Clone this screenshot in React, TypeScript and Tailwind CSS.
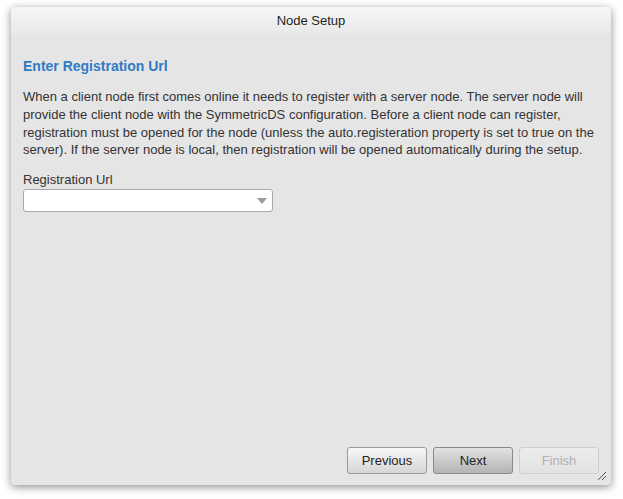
const font = { fontFamily: '"Liberation Sans", Arial, sans-serif' };

const ResizeGrip = () => (
    <svg width="10" height="10" viewBox="0 0 10 10" className="absolute right-[4px] bottom-[4px]">
        <line x1="1" y1="9" x2="9" y2="1" stroke="#555" strokeWidth="1" />
        <line x1="5" y1="9" x2="9" y2="5" stroke="#555" strokeWidth="1" />
    </svg>
);

export default function App() {
    return (
        <div className="w-[623px] h-[499px] bg-white pt-[7px] pl-[11px]" style={font}>
            <div className="relative w-[600px] h-[478px] rounded-[4px] bg-[#e5e5e5] shadow-[0_2px_8px_rgba(0,0,0,0.45)] flex flex-col">
                <div className="h-[28px] rounded-t-[4px] bg-gradient-to-b from-[#f6f6f6] to-[#e8e8e8] flex items-center justify-center text-[13px] text-[#222] pb-[1px]">
                    Node Setup
                </div>
                <div className="flex flex-col px-[12px] pt-[23px] flex-1">
                    <h1 className="text-[14px] font-bold text-[#2e7bc4] leading-[17px]">Enter Registration Url</h1>
                    <p className="mt-[13px] text-[13px] leading-[17.8px] text-[#333]">
                        When a client node first comes online it needs to register with a server node. The server node will
                        provide the client node with the SymmetricDS configuration. Before a client node can register,
                        registration must be opened for the node (unless the auto.registeration property is set to true on the
                        server). If the server node is local, then registration will be opened automatically during the setup.
                    </p>
                    <label className="mt-[13px] text-[13px] leading-[16px] text-[#333]">Registration Url</label>
                    <div className="mt-[1px] w-[250px] h-[23px] bg-white border border-[#a9a9a9] rounded-[3px] flex items-center justify-end pr-[5px]">
                        <svg width="10" height="6" viewBox="0 0 10 6">
                            <path d="M0 0 L10 0 L5 6 Z" fill="#9a9a9a" />
                        </svg>
                    </div>
                    <div className="flex-1" />
                    <div className="flex justify-end gap-[6px] pb-[11px]">
                        <button className="w-[80px] h-[27px] rounded-[3px] border border-[#9a9a9a] bg-gradient-to-b from-[#f7f7f7] to-[#d6d6d6] text-[13px] text-[#222]">
                            Previous
                        </button>
                        <button className="w-[80px] h-[27px] rounded-[3px] border border-[#8a8a8a] bg-gradient-to-b from-[#e2e2e2] to-[#b4b4b4] text-[13px] text-[#222]">
                            Next
                        </button>
                        <button className="w-[80px] h-[27px] rounded-[3px] border border-[#cfcfcf] bg-gradient-to-b from-[#ececec] to-[#e2e2e2] text-[13px] text-[#b0b0b0]">
                            Finish
                        </button>
                    </div>
                </div>
                <ResizeGrip />
            </div>
        </div>
    );
}
